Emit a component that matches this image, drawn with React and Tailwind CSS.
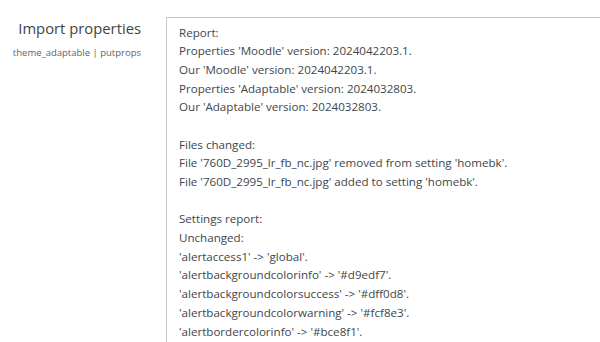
export default function App() {
  const lines = [
    "Report:",
    "Properties 'Moodle' version: 2024042203.1.",
    "Our 'Moodle' version: 2024042203.1.",
    "Properties 'Adaptable' version: 2024032803.",
    "Our 'Adaptable' version: 2024032803.",
    "",
    "Files changed:",
    "File '760D_2995_lr_fb_nc.jpg' removed from setting 'homebk'.",
    "File '760D_2995_lr_fb_nc.jpg' added to setting 'homebk'.",
    "",
    "Settings report:",
    "Unchanged:",
    "'alertaccess1' -> 'global'.",
    "'alertbackgroundcolorinfo' -> '#d9edf7'.",
    "'alertbackgroundcolorsuccess' -> '#dff0d8'.",
    "'alertbackgroundcolorwarning' -> '#fcf8e3'.",
    "'alertbordercolorinfo' -> '#bce8f1'.",
  ];
  return (
    <div className="w-[600px] h-[342px] overflow-hidden bg-white" style={{ fontFamily: "'Open Sans', 'Noto Sans', sans-serif" }}>
      <div className="flex pt-[17px] gap-[25px]">
        <div className="w-[141px] shrink-0 text-right">
          <div className="text-[14.8px] leading-[22px] text-[#3f4448]">Import properties</div>
          <div className="text-[9.5px] leading-[14px] text-[#5d656c] mt-[7px]">theme_adaptable | putprops</div>
        </div>
        <div className="w-[500px] shrink-0 h-[400px] border border-[#c4c8cc] pl-[12px] pt-[5.5px] text-[11.6px] leading-[18.7px] text-[#40464b]">
          {lines.map((l, i) => (
            <div key={i} className="h-[18.7px] whitespace-nowrap">{l}</div>
          ))}
        </div>
      </div>
    </div>
  );
}
